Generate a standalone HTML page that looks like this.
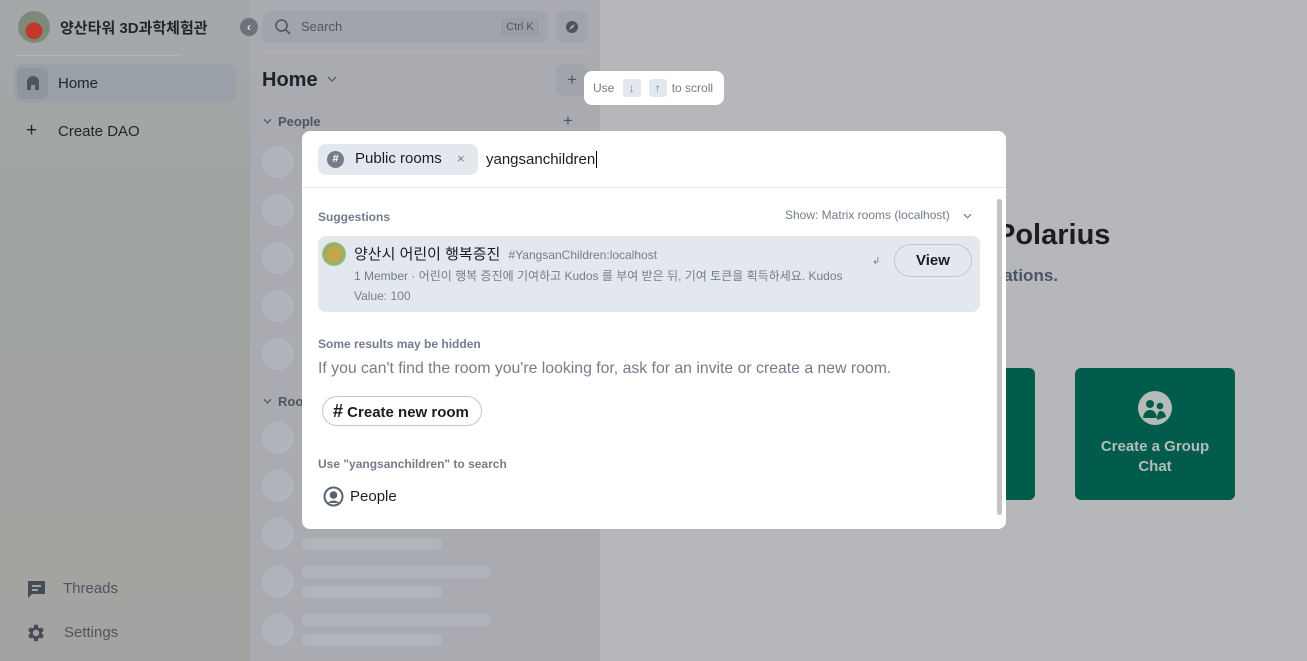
<!DOCTYPE html>
<html><head><meta charset="utf-8"><style>
*{box-sizing:border-box;margin:0;padding:0}
body{width:1307px;height:661px;overflow:hidden;font-family:"Liberation Sans","Noto Sans CJK KR",sans-serif;position:relative;background:#b5b7bb;color:#1b1d22}
.left{position:absolute;left:0;top:0;width:250px;height:661px;background:linear-gradient(180deg,#a5a8ab 0%,#9ea39f 40%,#a5a3a1 100%)}
.list{position:absolute;left:250px;top:0;width:350px;height:661px;background:#a9abb0}
.abs{position:absolute}
.sk{position:absolute;background:#b1b4ba;border-radius:12px}
.modal{position:absolute;left:302px;top:131px;width:704px;height:398px;background:#fff;border-radius:8px;overflow:hidden}
</style></head><body>
<div class="left">
  <div class="abs" style="left:18px;top:11px;width:32px;height:32px;border-radius:50%;background:radial-gradient(circle at 50% 62%,#c0392b 0 32%,#7d8a7a 34%)"></div>
  <div class="abs" style="left:60px;top:17px;font-size:15px;font-weight:bold;color:#22262b">양산타워 3D과학체험관</div>
  <div class="abs" style="left:16px;top:55px;width:164px;height:1px;background:#b3b6b8"></div>
  <div class="abs" style="left:14px;top:64px;width:222px;height:39px;border-radius:8px;background:#9aa0a7"></div>
  <div class="abs" style="left:17px;top:68px;width:31px;height:31px;border-radius:6px;background:#90969e"></div>
  <svg class="abs" style="left:25px;top:75px" width="16" height="16" viewBox="0 0 16 16"><path d="M2 15V7a6 6 0 0 1 12 0v8h-4v-5H6v5z" fill="#4d5560"/></svg>
  <div class="abs" style="left:58px;top:75px;font-size:15px;color:#22262b">Home</div>
  <div class="abs" style="left:26px;top:120px;font-size:19px;color:#22262b">+</div>
  <div class="abs" style="left:58px;top:123px;font-size:15px;color:#22262b">Create DAO</div>
  <svg class="abs" style="left:26px;top:579px" width="21" height="21" viewBox="0 0 21 21"><path d="M2 2h17v13H6l-4 4z" fill="#454c56"/><path d="M6 7h9M6 11h6" stroke="#a4a6a4" stroke-width="2"/></svg>
  <div class="abs" style="left:63px;top:580px;font-size:15px;color:#4d5560">Threads</div>
  <svg class="abs" style="left:25px;top:622px" width="22" height="22" viewBox="0 0 24 24"><path fill="#454c56" d="M19.4 13a7.5 7.5 0 0 0 0-2l2.1-1.6-2-3.5-2.5 1a7 7 0 0 0-1.7-1L15 3h-4l-.4 2.9a7 7 0 0 0-1.7 1l-2.5-1-2 3.5L6.6 11a7.5 7.5 0 0 0 0 2l-2.1 1.6 2 3.5 2.5-1a7 7 0 0 0 1.7 1L11 21h4l.4-2.9a7 7 0 0 0 1.7-1l2.5 1 2-3.5zM13 15.5a3.5 3.5 0 1 1 0-7 3.5 3.5 0 0 1 0 7z" transform="translate(-1 0)"/></svg>
  <div class="abs" style="left:64px;top:624px;font-size:15px;color:#4d5560">Settings</div>
</div>
<div class="abs" style="left:240px;top:18px;width:18px;height:18px;border-radius:50%;background:#6c737d;color:#fff;font-size:12px;text-align:center;line-height:18px;z-index:2">‹</div>
<div class="list">
  <div class="abs" style="left:12px;top:11px;width:286px;height:32px;border-radius:8px;background:#a1a5ab"></div>
  <svg class="abs" style="left:24px;top:18px" width="18" height="18" viewBox="0 0 18 18"><circle cx="7.5" cy="7.5" r="5.5" fill="none" stroke="#4d5560" stroke-width="1.6"/><path d="M12 12l4 4" stroke="#4d5560" stroke-width="1.6"/></svg>
  <div class="abs" style="left:51px;top:19px;font-size:13px;color:#4d5560">Search</div>
  <div class="abs" style="left:251px;top:18px;width:38px;height:19px;border-radius:4px;background:#9a9fa6;font-size:11px;color:#4d5560;text-align:center;line-height:19px">Ctrl K</div>
  <div class="abs" style="left:306px;top:11px;width:32px;height:32px;border-radius:8px;background:#a1a5ab"></div>
  <svg class="abs" style="left:315px;top:20px" width="14" height="14" viewBox="0 0 14 14"><circle cx="7" cy="7" r="6" fill="#4d5560"/><path d="M4 10l2-4 4-2-2 4z" fill="#a1a5ab"/></svg>
  <div class="abs" style="left:12px;top:51px;width:326px;height:1px;background:#b2b4b8"></div>
  <div class="abs" style="left:12px;top:69px;font-size:20px;font-weight:bold;color:#1f2328">Home</div>
  <svg class="abs" style="left:77px;top:76px" width="10" height="6" viewBox="0 0 10 6"><path d="M1 1l4 4 4-4" fill="none" stroke="#4d5560" stroke-width="1.2"/></svg>
  <div class="abs" style="left:306px;top:64px;width:32px;height:32px;border-radius:8px;background:#a1a5ab;text-align:center;line-height:32px;color:#4d5560;font-size:17px">+</div>
  <svg class="abs" style="left:13px;top:118px" width="9" height="6" viewBox="0 0 10 6"><path d="M1 1l4 4 4-4" fill="none" stroke="#4d5560" stroke-width="1.4"/></svg>
  <div class="abs" style="left:28px;top:114px;font-size:13px;font-weight:bold;color:#4d5560">People</div>
  <div class="abs" style="left:313px;top:111px;font-size:17px;color:#4d5560">+</div>
  <div class="sk" style="left:12px;top:146px;width:32px;height:32px;border-radius:50%"></div>
  <div class="sk" style="left:12px;top:194px;width:32px;height:32px;border-radius:50%"></div>
  <div class="sk" style="left:12px;top:242px;width:32px;height:32px;border-radius:50%"></div>
  <div class="sk" style="left:12px;top:290px;width:32px;height:32px;border-radius:50%"></div>
  <div class="sk" style="left:12px;top:338px;width:32px;height:32px;border-radius:50%"></div>
  <svg class="abs" style="left:13px;top:398px" width="9" height="6" viewBox="0 0 10 6"><path d="M1 1l4 4 4-4" fill="none" stroke="#4d5560" stroke-width="1.4"/></svg>
  <div class="abs" style="left:28px;top:394px;font-size:13px;font-weight:bold;color:#4d5560">Rooms</div>
  <div class="sk" style="left:12px;top:422px;width:32px;height:32px;border-radius:50%"></div>
  <div class="sk" style="left:12px;top:470px;width:32px;height:32px;border-radius:50%"></div>
  <div class="sk" style="left:12px;top:518px;width:32px;height:32px;border-radius:50%"></div>
  <div class="sk" style="left:52px;top:538px;width:140px;height:12px"></div>
  <div class="sk" style="left:12px;top:566px;width:32px;height:32px;border-radius:50%"></div>
  <div class="sk" style="left:52px;top:566px;width:188px;height:12px"></div>
  <div class="sk" style="left:52px;top:586px;width:140px;height:12px"></div>
  <div class="sk" style="left:12px;top:614px;width:32px;height:32px;border-radius:50%"></div>
  <div class="sk" style="left:52px;top:614px;width:188px;height:12px"></div>
  <div class="sk" style="left:52px;top:634px;width:140px;height:12px"></div>
</div>
<div class="abs" style="left:996px;top:219px;font-size:29px;font-weight:bold;color:#1b1d22">Polarius</div>
<div class="abs" style="left:990px;top:266px;font-size:17px;font-weight:bold;color:#4a5468">izations.</div>
<div class="abs" style="left:960px;top:368px;width:75px;height:132px;border-radius:6px;background:#015c4b"></div>
<div class="abs" style="left:1075px;top:368px;width:160px;height:132px;border-radius:6px;background:#015c4b;color:#b4bcba;text-align:center;font-weight:bold;font-size:15px">
  <svg style="margin-top:23px" width="34" height="34" viewBox="0 0 34 34"><circle cx="17" cy="17" r="17" fill="#b4bcba"/><circle cx="12" cy="13" r="4" fill="#015c4b"/><circle cx="22" cy="15" r="3.3" fill="#015c4b"/><path d="M5 27q1-8 7-8t7 8z M19 29q0-8 3-9 5 0 6 6z" fill="#015c4b"/></svg>
  <div style="margin-top:8px;line-height:20px">Create a Group<br>Chat</div>
</div>
<div class="abs" style="left:584px;top:71px;width:140px;height:34px;border-radius:8px;background:#fff;font-size:12px;color:#737d8c;line-height:34px;padding-left:9px">Use <span style="display:inline-block;width:18px;height:18px;border-radius:4px;background:#e3e7ee;text-align:center;line-height:18px;margin:0 5px">↓</span><span style="display:inline-block;width:18px;height:18px;border-radius:4px;background:#e3e7ee;text-align:center;line-height:18px;margin:0 5px 0 3px">↑</span>to scroll</div>
<div class="modal">
  <div class="abs" style="left:16px;top:13px;width:160px;height:31px;border-radius:8px;background:#e3e7ee"></div>
  <div class="abs" style="left:25px;top:20px;width:17px;height:17px;border-radius:50%;background:#737d8c;color:#fff;font-size:11px;text-align:center;line-height:17px;font-weight:bold">#</div>
  <div class="abs" style="left:53px;top:19px;font-size:15px;color:#1b1d22">Public rooms</div>
  <div class="abs" style="left:155px;top:20px;font-size:13px;color:#737d8c">×</div>
  <div class="abs" style="left:184px;top:20px;font-size:15px;color:#1b1d22">yangsanchildren<span style="border-left:1px solid #000;margin-left:1px"></span></div>
  <div class="abs" style="left:0;top:56px;width:704px;height:1px;background:#e3e7ee"></div>
  <div class="abs" style="left:695px;top:68px;width:5px;height:316px;border-radius:3px;background:#c4c4c4"></div>
  <div class="abs" style="left:16px;top:79px;font-size:12px;font-weight:bold;color:#737d8c">Suggestions</div>
  <div class="abs" style="left:483px;top:77px;font-size:12px;color:#737d8c">Show: Matrix rooms (localhost)</div>
  <svg class="abs" style="left:661px;top:82px" width="9" height="6" viewBox="0 0 10 6"><path d="M1 1l4 4 4-4" fill="none" stroke="#737d8c" stroke-width="1.3"/></svg>
  <div class="abs" style="left:16px;top:105px;width:662px;height:76px;border-radius:8px;background:#e3e7ee"></div>
  <div class="abs" style="left:20px;top:111px;width:24px;height:24px;border-radius:50%;background:radial-gradient(circle,#c4a54a 0 30%,#8fb36a 60%,#e8e0b0)"></div>
  <div class="abs" style="left:52px;top:112px;font-size:15px;color:#1b1d22">양산시 어린이 행복증진 <span style="font-size:12px;color:#737d8c;margin-left:4px">#YangsanChildren:localhost</span></div>
  <div class="abs" style="left:52px;top:135px;font-size:12px;color:#737d8c;line-height:20px;width:500px">1 Member · 어린이 행복 증진에 기여하고 Kudos 를 부여 받은 뒤, 기여 토큰을 획득하세요. Kudos<br>Value: 100</div>
  <div class="abs" style="left:570px;top:125px;font-size:10px;color:#737d8c">↲</div>
  <div class="abs" style="left:592px;top:113px;width:78px;height:33px;border-radius:17px;border:1px solid #c1c6cd;text-align:center;line-height:31px;font-size:15px;font-weight:bold;color:#1b1d22">View</div>
  <div class="abs" style="left:16px;top:206px;font-size:12px;font-weight:bold;color:#737d8c">Some results may be hidden</div>
  <div class="abs" style="left:16px;top:229px;font-size:15.8px;color:#737d8c">If you can't find the room you're looking for, ask for an invite or create a new room.</div>
  <div class="abs" style="left:20px;top:265px;width:160px;height:30px;border-radius:15px;border:1px solid #c1c6cd;font-size:15px;font-weight:bold;color:#1b1d22;line-height:28px;padding-left:10px"><span style="font-size:18px">#</span> Create new room</div>
  <div class="abs" style="left:16px;top:326px;font-size:12px;font-weight:bold;color:#737d8c">Use "yangsanchildren" to search</div>
  <svg class="abs" style="left:21px;top:355px" width="21" height="21" viewBox="0 0 21 21"><circle cx="10.5" cy="10.5" r="9" fill="none" stroke="#5a626d" stroke-width="2"/><circle cx="10.5" cy="9" r="3.8" fill="#5a626d"/><path d="M4.5 17q6-5 12 0" fill="#5a626d"/></svg>
  <div class="abs" style="left:48px;top:357px;font-size:15px;color:#1b1d22">People</div>
</div>
</body></html>
